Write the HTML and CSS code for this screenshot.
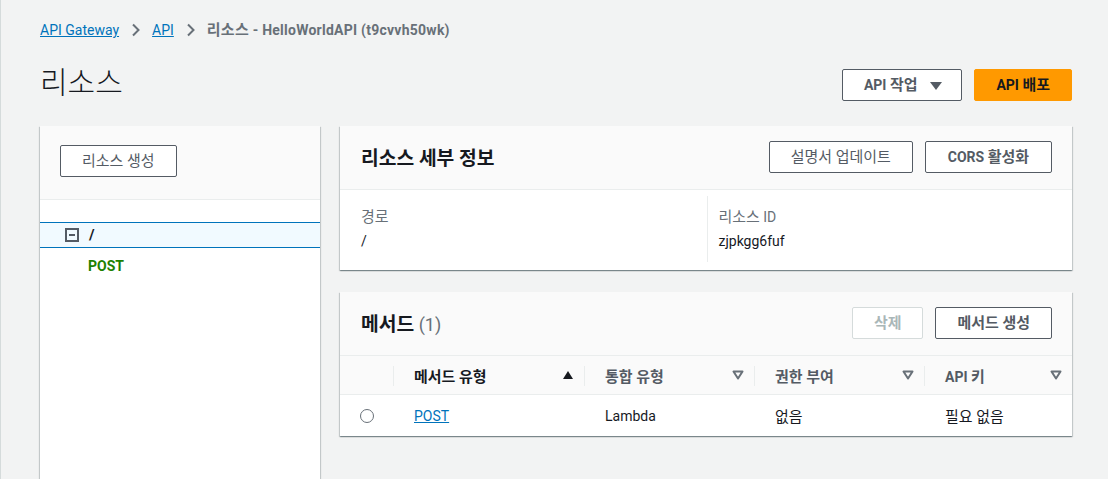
FILE: index.html
```html
<!DOCTYPE html>
<html lang="ko">

<head>
    <meta charset="UTF-8">
    <meta name="viewport" content="width=device-width, initial-scale=1.0">
    <title>리소스 - API Gateway</title>
    <link rel="stylesheet" href="styles.css">
</head>

<body>
    <div class="page">
        <nav class="breadcrumb">
            <a href="#">API Gateway</a>
            <svg class="chevron" width="10" height="14" viewBox="0 0 10 14"><path d="M2 1.5 L7.5 7 L2 12.5" fill="none" stroke="#687078" stroke-width="2"/></svg>
            <a href="#">API</a>
            <svg class="chevron" width="10" height="14" viewBox="0 0 10 14"><path d="M2 1.5 L7.5 7 L2 12.5" fill="none" stroke="#687078" stroke-width="2"/></svg>
            <span class="current"><span class="ko">리소스</span> - HelloWorldAPI (t9cvvh50wk)</span>
        </nav>

        <div class="page-header">
            <h1>리소스</h1>
            <div class="actions">
                <button class="btn btn-dropdown">API <span class="ko">작업</span><svg class="caret" width="12" height="10" viewBox="0 0 12 10"><path d="M0 1 H12 L6 9 Z" fill="#545b64"/></svg></button>
                <button class="btn btn-primary">API <span class="ko">배포</span></button>
            </div>
        </div>

        <div class="layout">
            <!-- resource tree -->
            <aside class="tree-panel">
                <div class="tree-header">
                    <button class="btn btn-light"><span class="ko">리소스 생성</span></button>
                </div>
                <div class="tree">
                    <div class="tree-row selected">
                        <svg class="toggle" width="14" height="14" viewBox="0 0 14 14"><rect x="1" y="1" width="12" height="12" fill="none" stroke="#545b64" stroke-width="2"/><path d="M4 7 H10" stroke="#545b64" stroke-width="2"/></svg>
                        <span class="path">/</span>
                    </div>
                    <div class="tree-method">POST</div>
                </div>
            </aside>

            <div class="content">
                <!-- resource details -->
                <section class="card">
                    <div class="card-header">
                        <h2><span class="ko">리소스 세부 정보</span></h2>
                        <div class="actions">
                            <button class="btn btn-light"><span class="ko">설명서 업데이트</span></button>
                            <button class="btn btn-wide">CORS <span class="ko">활성화</span></button>
                        </div>
                    </div>
                    <div class="details">
                        <div class="detail-col">
                            <div class="label"><span class="ko">경로</span></div>
                            <div class="value">/</div>
                        </div>
                        <div class="detail-col">
                            <div class="label"><span class="ko">리소스</span> ID</div>
                            <div class="value">zjpkgg6fuf</div>
                        </div>
                    </div>
                </section>

                <!-- methods -->
                <section class="card">
                    <div class="card-header">
                        <h2><span class="ko">메서드</span> <span class="count">(1)</span></h2>
                        <div class="actions">
                            <button class="btn btn-disabled" disabled><span class="ko">삭제</span></button>
                            <button class="btn"><span class="ko">메서드 생성</span></button>
                        </div>
                    </div>
                    <div class="table">
                        <div class="table-row table-head">
                            <div class="cell"></div>
                            <div class="cell sorted"><span class="ko">메서드 유형</span> <svg class="sort" width="12" height="10" viewBox="0 0 12 10"><path d="M6 1 L11 9 H1 Z" fill="#16191f"/></svg></div>
                            <div class="cell"><span class="ko">통합 유형</span> <svg class="sort" width="12" height="10" viewBox="0 0 12 10"><path d="M1.5 1.5 H10.5 L6 8.5 Z" fill="none" stroke="#687078" stroke-width="2" stroke-linejoin="round"/></svg></div>
                            <div class="cell"><span class="ko">권한 부여</span> <svg class="sort" width="12" height="10" viewBox="0 0 12 10"><path d="M1.5 1.5 H10.5 L6 8.5 Z" fill="none" stroke="#687078" stroke-width="2" stroke-linejoin="round"/></svg></div>
                            <div class="cell"><span>API <span class="ko">키</span></span> <svg class="sort" width="12" height="10" viewBox="0 0 12 10"><path d="M1.5 1.5 H10.5 L6 8.5 Z" fill="none" stroke="#687078" stroke-width="2" stroke-linejoin="round"/></svg></div>
                        </div>
                        <div class="table-row">
                            <div class="cell radio-cell"><span class="radio"></span></div>
                            <div class="cell"><a href="#">POST</a></div>
                            <div class="cell">Lambda</div>
                            <div class="cell"><span class="ko">없음</span></div>
                            <div class="cell"><span class="ko">필요 없음</span></div>
                        </div>
                    </div>
                </section>
            </div>
        </div>
    </div>
</body>

</html>
```

FILE: styles.css
```css
body {
    font-family: Roboto, "Noto Sans CJK KR", sans-serif;
    font-size: 14px;
    color: #16191f;
    margin: 0;
    padding: 0;
    background-color: #f2f3f3;
}

h1, h2, p {
    margin: 0;
}

a {
    color: #0073bb;
}

/* Korean glyphs run a little wider in the original */
.ko {
    font-size: 1.07em;
}

.page {
    border-left: 1px solid #d5dbdb;
    padding: 20px 36px 0 39px;
    min-height: 479px;
    box-sizing: border-box;
}

/* breadcrumb */
.breadcrumb {
    display: flex;
    align-items: center;
    gap: 11px;
    height: 20px;
    line-height: 20px;
}

.breadcrumb a + .chevron {
    margin-left: 1px;
}

.breadcrumb .current {
    color: #687078;
    font-weight: 700;
    letter-spacing: 0.25px;
}

/* page header */
.page-header {
    display: flex;
    justify-content: space-between;
    align-items: flex-start;
    margin-top: 19px;
    height: 67px;
}

.page-header h1 {
    font-size: 30px;
    font-weight: 300;
    line-height: 48px;
}

.page-header .actions {
    margin-top: 10px;
}

.actions {
    display: flex;
    gap: 12px;
}

/* buttons */
.btn {
    font-family: inherit;
    font-size: 14px;
    font-weight: 700;
    line-height: 30px;
    color: #545b64;
    background-color: #ffffff;
    border: 1px solid #545b64;
    border-radius: 2px;
    height: 32px;
    padding: 0 21px;
    cursor: pointer;
}

.btn-dropdown {
    padding-right: 19px;
}

.btn .caret {
    margin-left: 13px;
    vertical-align: -1px;
}

.btn-primary {
    background-color: #ff9900;
    border-color: #ff9900;
    color: #16191f;
}

.btn-light {
    font-weight: 400;
}

.btn-wide {
    padding: 0 22px;
}

.btn-disabled {
    color: #aab7b8;
    border-color: #d5dbdb;
    cursor: default;
}

/* layout */
.layout {
    display: grid;
    grid-template-columns: 280px 1fr;
    gap: 20px;
    align-items: start;
}

.tree-panel,
.card {
    background-color: #ffffff;
    box-shadow: 0 1px 1px 0 rgba(0, 28, 36, 0.3), 1px 1px 1px 0 rgba(0, 28, 36, 0.15), -1px 1px 1px 0 rgba(0, 28, 36, 0.15);
}

.tree-panel {
    min-height: 400px;
}

.tree-header {
    background-color: #fafafa;
    padding: 19px 20px 22px;
    border-bottom: 1px solid #eaeded;
}

.tree {
    padding-top: 22px;
}

.tree-row {
    display: flex;
    align-items: center;
    gap: 10px;
    height: 24px;
    padding-left: 25px;
}

.tree-row.selected {
    background-color: #f1faff;
    border-top: 1px solid #0073bb;
    border-bottom: 1px solid #0073bb;
}

.tree-row .path {
    font-weight: 700;
    font-size: 15px;
}

.tree-method {
    color: #1d8102;
    font-weight: 700;
    padding-left: 48px;
    line-height: 36px;
}

/* cards */
.content {
    display: flex;
    flex-direction: column;
    gap: 22px;
}

.card-header {
    display: flex;
    justify-content: space-between;
    align-items: center;
    background-color: #fafafa;
    padding: 15px 20px 16px 21px;
    border-bottom: 1px solid #eaeded;
}

.card-header h2 {
    font-size: 18px;
    font-weight: 700;
}

.card-header .count {
    color: #687078;
    font-weight: 400;
}

.card-header .actions {
    gap: 12px;
}

.details {
    display: grid;
    grid-template-columns: 1fr 1fr;
    padding: 6px 20px 8px 21px;
}

.detail-col {
    padding: 10px 0;
}

.detail-col + .detail-col {
    border-left: 1px solid #eaeded;
    padding-left: 11px;
}

.label {
    color: #687078;
    line-height: 22px;
}

.value {
    line-height: 22px;
    margin-top: 2px;
}

/* methods table */
.table-row {
    display: grid;
    grid-template-columns: 53px 191px 170px 170px 1fr;
    height: 41px;
    align-items: center;
}

.table-head {
    background-color: #fafafa;
    height: 38px;
    border-bottom: 1px solid #eaeded;
    color: #545b64;
    font-weight: 700;
}

.cell {
    position: relative;
    display: flex;
    align-items: center;
    justify-content: space-between;
    padding: 0 10px 0 21px;
    height: 100%;
}

.table-head .cell:not(:first-child)::before {
    content: "";
    position: absolute;
    left: 0;
    top: 10px;
    bottom: 8px;
    border-left: 1px solid #eaeded;
}

.table-head .sorted {
    color: #16191f;
}

.table-row:not(.table-head) .cell {
    justify-content: flex-start;
}

.radio-cell {
    padding: 0;
    justify-content: center !important;
}

.radio {
    width: 12px;
    height: 12px;
    border: 1.5px solid #687078;
    border-radius: 50%;
    margin-left: 1px;
}
```
